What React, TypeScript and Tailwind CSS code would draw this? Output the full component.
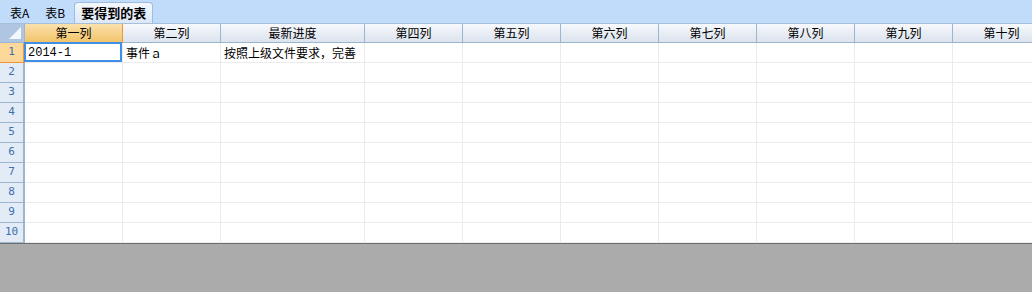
import React from 'react';

const font = { fontFamily: '"Noto Sans CJK SC", "Liberation Sans", sans-serif' };

const columns = [
  { name: '第一列', width: 'w-[98px]' },
  { name: '第二列', width: 'w-[98px]' },
  { name: '最新进度', width: 'w-[144px]' },
  { name: '第四列', width: 'w-[98px]' },
  { name: '第五列', width: 'w-[98px]' },
  { name: '第六列', width: 'w-[98px]' },
  { name: '第七列', width: 'w-[98px]' },
  { name: '第八列', width: 'w-[98px]' },
  { name: '第九列', width: 'w-[98px]' },
  { name: '第十列', width: 'w-[98px]' },
];

const firstRow = ['2014-1', '事件ａ', '按照上级文件要求，完善'];

export default function App() {
  const rows = Array.from({ length: 10 }, (_, i) => i + 1);

  return (
    <div className="w-[1032px] h-[292px] bg-[#ababab] overflow-hidden text-[12px] text-black" style={font}>
      {/* sheet tabs */}
      <div className="h-[23px] bg-[#c1dbfa] flex items-end pl-[3px] gap-[2px]">
        <div className="h-[21px] px-[7px] flex items-center">表A</div>
        <div className="h-[21px] px-[7px] flex items-center">表B</div>
        <div className="h-[21px] px-[6px] flex items-center font-bold text-[13px] rounded-t-[4px] border border-b-0 border-[#9cbce2] bg-gradient-to-b from-[#f4f8fd] to-[#dde8f6]">
          要得到的表
        </div>
      </div>

      {/* grid */}
      <div className="bg-white border-b border-[#6e6e6e] overflow-hidden">
        <div className="flex h-[20px] w-max border-t border-[#a7bfd9]">
          <div className="w-[25px] shrink-0 bg-[#aec6e2] border-r border-b border-[#9db6d0] relative">
            <div className="absolute right-[3px] bottom-[3px] w-0 h-0 border-l-[12px] border-l-transparent border-b-[12px] border-b-[#f4f8fc]" />
          </div>
          {columns.map((c, i) => (
            <div
              key={c.name}
              className={
                i === 0
                  ? `${c.width} shrink-0 flex items-center justify-center border-r border-b border-[#f29536] bg-gradient-to-b from-[#fbe1ac] to-[#f2c468]`
                  : `${c.width} shrink-0 flex items-center justify-center border-r border-b border-[#9db6d0] bg-gradient-to-b from-[#f7f9fc] to-[#dbe3ee]`
              }
            >
              {c.name}
            </div>
          ))}
        </div>

        {rows.map((r) => (
          <div key={r} className="flex h-[20px] w-max">
            <div
              className={
                r === 1
                  ? 'w-[25px] shrink-0 flex items-center justify-center text-[#3b6fae] bg-[#fcd89a] border-r-2 border-b border-r-[#f29536] border-b-[#f29536]'
                  : 'w-[25px] shrink-0 flex items-center justify-center text-[#3b6fae] bg-[#e3ebf6] border-r-2 border-b border-[#9db6d0]'
              }
              style={{ fontFamily: '"DejaVu Sans Mono", monospace', fontSize: 11 }}
            >
              {r}
            </div>
            {columns.map((c, i) => (
              <div key={c.name} className={`${c.width} shrink-0 border-r border-b border-[#ebebeb] relative`}>
                {r === 1 && i === 0 && (
                  <div className="absolute -left-[1px] -top-[1px] right-0 bottom-0 border-2 border-[#3f8fe6]" />
                )}
                {r === 1 && firstRow[i] && (
                  <div className="h-full flex items-center pl-[3px] whitespace-nowrap">
                    {i === 0 ? <span style={{ fontFamily: '"Liberation Mono", monospace' }}>{firstRow[i]}</span> : firstRow[i]}
                  </div>
                )}
              </div>
            ))}
          </div>
        ))}
      </div>
    </div>
  );
}
